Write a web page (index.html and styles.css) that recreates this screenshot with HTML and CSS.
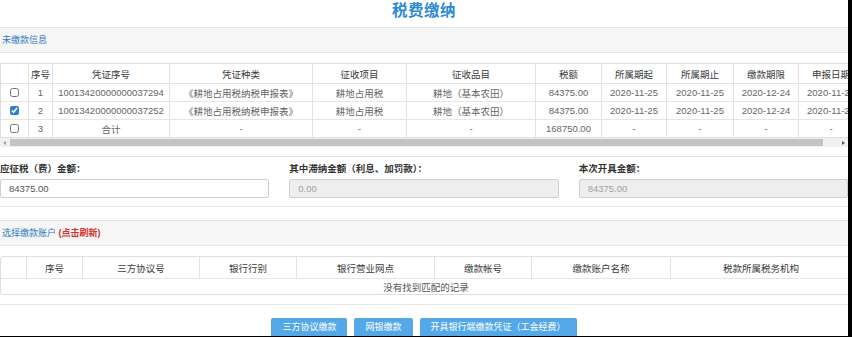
FILE: index.html
```html
<!DOCTYPE html>
<html lang="zh-CN">
<head>
  <meta charset="UTF-8">
  <title>税费缴纳</title>
  <link rel="stylesheet" href="styles.css">
</head>
<body>
  <div class="page">
    <h1 class="title">税费缴纳</h1>

    <!-- 未缴款信息 -->
    <div class="panel-heading">未缴款信息</div>
    <div class="panel-body">
      <div class="table-wrap">
        <table class="grid grid-tax">
          <colgroup>
            <col style="width:27px"><col style="width:24px"><col style="width:117px">
            <col style="width:143px"><col style="width:94px"><col style="width:129px">
            <col style="width:66px"><col style="width:65px"><col style="width:67px">
            <col style="width:65px"><col style="width:65px">
          </colgroup>
          <thead>
            <tr>
              <th></th><th>序号</th><th>凭证序号</th><th>凭证种类</th><th>征收项目</th>
              <th>征收品目</th><th>税额</th><th>所属期起</th><th>所属期止</th><th>缴款期限</th><th>申报日期</th>
            </tr>
          </thead>
          <tbody>
            <tr>
              <td><input type="checkbox"></td><td>1</td><td>10013420000000037294</td>
              <td>《耕地占用税纳税申报表》</td><td>耕地占用税</td><td>耕地（基本农田）</td>
              <td>84375.00</td><td>2020-11-25</td><td>2020-11-25</td><td>2020-12-24</td><td>2020-11-25</td>
            </tr>
            <tr>
              <td><input type="checkbox" checked></td><td>2</td><td>10013420000000037252</td>
              <td>《耕地占用税纳税申报表》</td><td>耕地占用税</td><td>耕地（基本农田）</td>
              <td>84375.00</td><td>2020-11-25</td><td>2020-11-25</td><td>2020-12-24</td><td>2020-11-25</td>
            </tr>
            <tr>
              <td><input type="checkbox"></td><td>3</td><td>合计</td>
              <td>-</td><td>-</td><td>-</td>
              <td>168750.00</td><td>-</td><td>-</td><td>-</td><td>-</td>
            </tr>
          </tbody>
        </table>
      </div>
      <div class="hscroll">
        <span class="arrow arrow-left"></span>
        <span class="thumb"></span>
        <span class="arrow arrow-right"></span>
      </div>
    </div>

    <!-- 金额 -->
    <div class="form-row">
      <div class="field">
        <label>应征税（费）金额：</label>
        <input type="text" value="84375.00">
      </div>
      <div class="field">
        <label>其中滞纳金额（利息、加罚款）：</label>
        <input type="text" value="0.00" disabled>
      </div>
      <div class="field">
        <label>本次开具金额：</label>
        <input type="text" value="84375.00" disabled>
      </div>
    </div>

    <!-- 缴款账户 -->
    <div class="panel-heading">选择缴款账户 <span class="refresh">(点击刷新)</span></div>
    <div class="panel-body">
      <table class="grid grid-account">
        <colgroup>
          <col style="width:25px"><col style="width:56px"><col style="width:117px">
          <col style="width:97px"><col style="width:138px"><col style="width:97px">
          <col style="width:139px"><col style="width:181px">
        </colgroup>
        <thead>
          <tr>
            <th></th><th>序号</th><th>三方协议号</th><th>银行行别</th><th>银行营业网点</th>
            <th>缴款帐号</th><th>缴款账户名称</th><th>税款所属税务机构</th>
          </tr>
        </thead>
        <tbody>
          <tr><td colspan="8" class="empty">没有找到匹配的记录</td></tr>
        </tbody>
      </table>
    </div>

    <div class="actions">
      <button type="button">三方协议缴款</button>
      <button type="button">网银缴款</button>
      <button type="button">开具银行端缴款凭证（工会经费）</button>
    </div>
  </div>
</body>
</html>
```

FILE: styles.css
```css
* {
  margin: 0;
  padding: 0;
  box-sizing: border-box;
}

html,
body {
  background-color: #000;
}

body {
  font-family: 'Liberation Sans', 'Noto Sans CJK SC', sans-serif;
  font-size: 9.5px;
  color: #666;
}

.page {
  width: 848px;
  height: 336px;
  background-color: #fff;
  overflow: hidden;
}

.title {
  height: 27px;
  padding-top: 2px;
  font-size: 15.5px;
  line-height: 17px;
  font-weight: bold;
  color: #2d89d3;
  text-align: center;
  letter-spacing: 0.5px;
}

/* Panel headings */
.panel-heading {
  height: 26px;
  padding-left: 2px;
  font-size: 9px;
  line-height: 24px;
  color: #2c7cc2;
  background-color: #f6f6f6;
  border-top: 1px solid #e4e4e4;
  border-bottom: 1px solid #e4e4e4;
}

.panel-heading .refresh {
  color: #d8322c;
  font-weight: bold;
}

.panel-body {
  padding: 10px 0 9px;
  border-bottom: 1px solid #e6e6e6;
}

.table-wrap {
  overflow: hidden;
}

/* Tables */
.grid {
  border-collapse: separate;
  border-spacing: 0;
  table-layout: fixed;
  border: 1px solid #dedede;
}

.grid th,
.grid td {
  text-align: center;
  white-space: nowrap;
  overflow: hidden;
  border-left: 1px solid #e2e2e2;
  border-top: 1px solid #e6e6e6;
}

.grid th:first-child,
.grid td:first-child {
  border-left: none;
}

.grid thead th {
  border-top: none;
  font-weight: normal;
  color: #3a3a3a;
}

.grid-tax {
  width: 862px;
}

.grid-tax th {
  height: 19px;
}

.grid-tax td {
  height: 18px;
}

.grid-tax input[type="checkbox"] {
  display: block;
  width: 9px;
  height: 9px;
  margin: 0 auto 0 9px;
  accent-color: #2f7bd6;
}

.grid-account {
  width: 850px;
  border-radius: 3px;
}

.grid-account th {
  height: 21px;
}

.grid-account td {
  height: 16px;
}

.grid-account td.empty {
  color: #555;
}

/* Fake horizontal scrollbar */
.hscroll {
  display: flex;
  align-items: center;
  height: 9px;
  background-color: #f1f1f1;
}

.hscroll .thumb {
  width: 813px;
  height: 7px;
  background-color: #c3c3c3;
}

.hscroll .arrow {
  width: 10px;
  height: 9px;
  position: relative;
}

.hscroll .arrow::after {
  content: "";
  position: absolute;
  top: 2.5px;
  border-top: 2px solid transparent;
  border-bottom: 2px solid transparent;
}

.hscroll .arrow-left::after {
  left: 3px;
  border-right: 3px solid #a0a0a0;
}

.hscroll .arrow-right {
  margin-left: 15px;
}

.hscroll .arrow-right::after {
  left: 4px;
  border-left: 3px solid #555;
}

/* Amount fields */
.form-row {
  display: grid;
  grid-template-columns: repeat(3, 1fr);
  gap: 20px;
  padding: 5px 0 8px;
  margin-bottom: 13px;
  border-bottom: 1px solid #e6e6e6;
}

.field label {
  display: block;
  font-size: 9.5px;
  line-height: 14px;
  font-weight: bold;
  color: #333;
  margin-bottom: 3px;
}

.field input {
  display: block;
  width: 100%;
  height: 19px;
  padding-left: 8px;
  border: 1px solid #cfcfcf;
  border-radius: 2px;
  font-family: inherit;
  font-size: 9.5px;
  color: #555;
  background-color: #fff;
}

.field input:disabled {
  background-color: #eeeeee;
  color: #a0a0a0;
}

/* Buttons */
.actions {
  display: flex;
  justify-content: center;
  gap: 7px;
  margin-top: 13px;
}

.actions button {
  height: 22px;
  padding: 0 11px;
  border: none;
  border-radius: 2px;
  font-family: inherit;
  font-size: 9px;
  line-height: 16px;
  display: flex;
  align-items: flex-start;
  padding-top: 1px;
  color: #fff;
  background-color: #55a8e8;
  cursor: pointer;
}
```
